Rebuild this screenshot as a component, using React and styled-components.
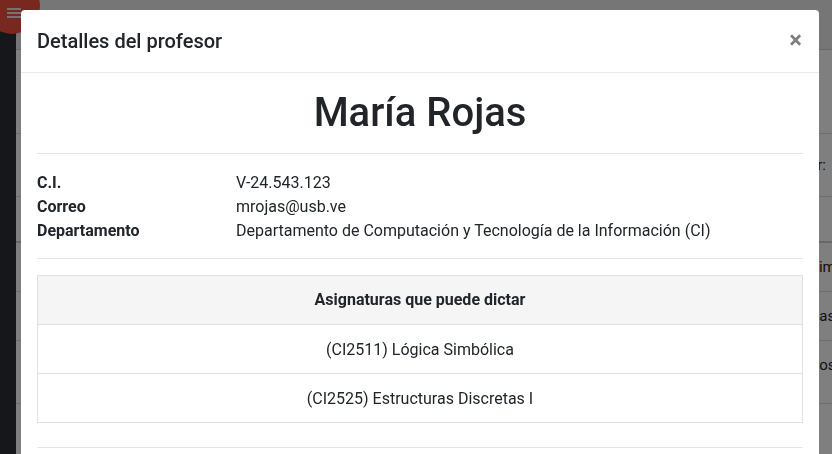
import React from "react";
import styled, { createGlobalStyle } from "styled-components";

const Global = createGlobalStyle`
  html, body { margin: 0; padding: 0; height: 100%; overflow: hidden; }
  body {
    font-family: Roboto, "Liberation Sans", Arial, sans-serif;
    font-size: 16px;
    line-height: 1.5;
    color: #212529;
    background: #fff;
  }
  * { box-sizing: border-box; }
`;

/* ---------- page underneath ---------- */
const Page = styled.div`
  display: flex;
  height: 454px;
  overflow: hidden;
`;
const Sidebar = styled.aside`
  flex: 0 0 16px;
  background: #2b2e35;
`;
const FabButton = styled.button`
  position: absolute;
  left: -16px;
  top: -22px;
  width: 56px;
  height: 56px;
  border: 0;
  border-radius: 50%;
  background: #f2503f;
  display: flex;
  flex-direction: column;
  justify-content: flex-start;
  align-items: flex-start;
  gap: 2px;
  padding: 30px 0 0 23px;
`;
const Bar = styled.span`
  display: block;
  width: 14px;
  height: 2px;
  background: #e8e8e8;
`;
const Main = styled.main`
  flex: 1;
  display: flex;
  flex-direction: column;
  min-width: 0;
`;
const Navbar = styled.header`
  height: 50px;
  flex: 0 0 50px;
  background: #ececec;
  border-bottom: 1px solid #d0d0d0;
`;
const CardHeader = styled.div`
  height: 84px;
  border-bottom: 1px solid #dcdcdc;
`;
const SearchRow = styled.div`
  height: 63px;
  display: flex;
  align-items: center;
  justify-content: flex-end;
  gap: 6px;
  border-bottom: 1px solid #dcdcdc;
  font-size: 15px;
  margin-right: -40px;
`;
const SearchInput = styled.input`
  width: 40px;
  height: 26px;
  border: 1px solid #c8c8c8;
  border-radius: 3px;
`;
const THead = styled.div`
  height: 46px;
  border-bottom: 2px solid #cfcfcf;
`;
const TRow = styled.div`
  min-height: ${(p) => p.$h}px;
  padding: 12px 0 12px 794px;
  font-size: 15px;
  line-height: 24px;
  white-space: nowrap;
  border-bottom: 1px solid #dcdcdc;
`;

/* ---------- modal ---------- */
const Backdrop = styled.div`
  position: fixed;
  inset: 0;
  background: rgba(0, 0, 0, 0.5);
  display: flex;
  align-items: flex-start;
  padding: 10px 0 0 21px;
`;
const Dialog = styled.div`
  width: 798px;
  background: #fff;
  border-radius: 4px;
  overflow: hidden;
`;
const Header = styled.div`
  display: flex;
  align-items: center;
  justify-content: space-between;
  padding: 16px;
  border-bottom: 1px solid #e9ecef;
`;
const Title = styled.h5`
  margin: 0;
  font-size: 20px;
  font-weight: 500;
  line-height: 30px;
`;
const Close = styled.button`
  border: 0;
  background: transparent;
  padding: 0 0 2px 0;
  margin-right: 1px;
  font-family: Roboto, "Liberation Sans", Arial, sans-serif;
  font-size: 24px;
  font-weight: 700;
  line-height: 1;
  color: #000;
  opacity: 0.5;
  cursor: pointer;
`;
const Body = styled.div`
  padding: 16px;
`;
const Name = styled.h1`
  margin: 0 0 8px;
  text-align: center;
  font-size: 40px;
  font-weight: 500;
  line-height: 1.2;
`;
const Rule = styled.hr`
  margin: ${(p) => p.$top ?? 16}px 0 16px;
  border: 0;
  border-top: 1px solid rgba(0, 0, 0, 0.1);
`;
const InfoGrid = styled.dl`
  margin: 0;
  padding-top: 1px;
  display: grid;
  grid-template-columns: 199px 1fr;
  line-height: 24px;
`;
const Label = styled.dt`
  font-weight: 700;
`;
const Value = styled.dd`
  margin: 0;
`;
const Table = styled.table`
  width: 100%;
  border-collapse: collapse;
  margin: 0;
`;
const Th = styled.th`
  background: #f5f5f5;
  border: 1px solid #dee2e6;
  padding: 12px;
  font-weight: 700;
  line-height: 24px;
  text-align: center;
`;
const Td = styled.td`
  border: 1px solid #dee2e6;
  padding: 13px 12px 11px;
  line-height: 24px;
  text-align: center;
`;

const info = [
  ["C.I.", "V-24.543.123"],
  ["Correo", "mrojas@usb.ve"],
  ["Departamento", "Departamento de Computación y Tecnología de la Información (CI)"],
];

const subjects = ["(CI2511) Lógica Simbólica", "(CI2525) Estructuras Discretas I"];

export default function App() {
  return (
    <>
      <Global />
      <Page>
        <Sidebar />
        <FabButton aria-label="menu">
          <Bar />
          <Bar />
          <Bar />
        </FabButton>
        <Main>
          <Navbar />
          <CardHeader />
          <SearchRow>
            Buscar:
            <SearchInput />
          </SearchRow>
          <THead />
          <TRow $h={48}>Tim</TRow>
          <TRow $h={48}>Bas</TRow>
          <TRow $h={63}>Ros</TRow>
        </Main>
      </Page>
      <Backdrop>
        <Dialog role="dialog">
          <Header>
            <Title>Detalles del profesor</Title>
            <Close aria-label="Cerrar">×</Close>
          </Header>
          <Body>
            <Name>María Rojas</Name>
            <Rule />
            <InfoGrid>
              {info.map(([k, v]) => (
                <React.Fragment key={k}>
                  <Label>{k}</Label>
                  <Value>{v}</Value>
                </React.Fragment>
              ))}
            </InfoGrid>
            <Rule $top={15} />
            <Table>
              <thead>
                <tr>
                  <Th>Asignaturas que puede dictar</Th>
                </tr>
              </thead>
              <tbody>
                {subjects.map((s) => (
                  <tr key={s}>
                    <Td>{s}</Td>
                  </tr>
                ))}
              </tbody>
            </Table>
            <Rule $top={24} />
          </Body>
        </Dialog>
      </Backdrop>
    </>
  );
}
